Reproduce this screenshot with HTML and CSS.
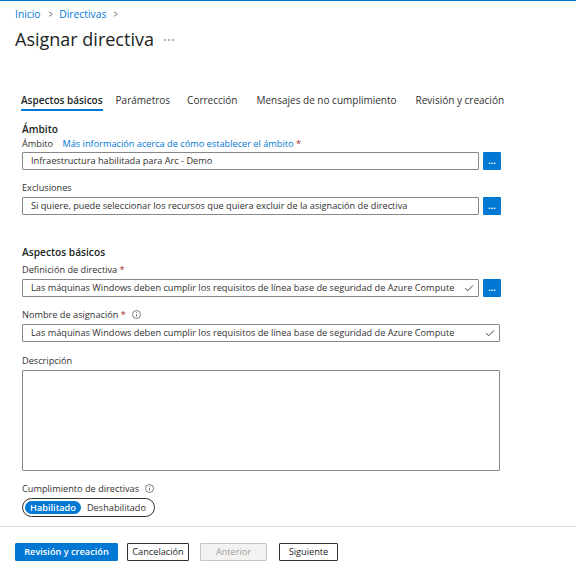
FILE: index.html
```html
<!DOCTYPE html>
<html lang="es">
<head>
<meta charset="utf-8">
<link rel="stylesheet" href="styles.css">
</head>
<body>
<div class="page">
  <header class="header">
    <nav class="crumbs">
      <a class="crumb">Inicio</a><span class="sep">&gt;</span><a class="crumb">Directivas</a><span class="sep">&gt;</span>
    </nav>
    <div class="title-row">
      <h1 class="title">Asignar directiva</h1>
      <svg class="more" width="10" height="4" viewBox="0 0 10 4"><circle cx="1" cy="2" r="0.7" fill="#323130"/><circle cx="5" cy="2" r="0.7" fill="#323130"/><circle cx="9" cy="2" r="0.7" fill="#323130"/></svg>
    </div>
  </header>

  <main class="content">
    <div class="tabs">
      <span class="tab active">Aspectos básicos</span>
      <span class="tab">Parámetros</span>
      <span class="tab">Corrección</span>
      <span class="tab">Mensajes de no cumplimiento</span>
      <span class="tab">Revisión y creación</span>
    </div>

    <section class="section">
      <h2 class="section-title">Ámbito</h2>
      <div class="label l-1">Ámbito <a class="link">Más información acerca de cómo establecer el ámbito</a> <span class="req">*</span></div>
      <div class="field-row f-1">
        <div class="input">Infraestructura habilitada para Arc - Demo</div>
        <button class="dots">...</button>
      </div>
      <div class="label l-11">Exclusiones</div>
      <div class="field-row">
        <div class="input">Si quiere, puede seleccionar los recursos que quiera excluir de la asignación de directiva</div>
        <button class="dots">...</button>
      </div>
    </section>

    <section class="section section-2">
      <h2 class="section-title">Aspectos básicos</h2>
      <div class="label l-4">Definición de directiva <span class="req">*</span></div>
      <div class="field-row">
        <div class="input has-check">Las máquinas Windows deben cumplir los requisitos de línea base de seguridad de Azure Compute
          <svg class="check" viewBox="0 0 10 10" width="10" height="10"><path d="M1 5.2 L3.7 7.8 L9 2.4" fill="none" stroke="#323130" stroke-width="0.9"/></svg>
        </div>
        <button class="dots">...</button>
      </div>
      <div class="label l-11">Nombre de asignación <span class="req">*</span><svg class="info" width="9" height="9" viewBox="0 0 9 9"><circle cx="4.5" cy="4.5" r="4" fill="none" stroke="#605e5c" stroke-width="0.8"/><line x1="4.5" y1="3.9" x2="4.5" y2="6.8" stroke="#605e5c" stroke-width="0.8"/><circle cx="4.5" cy="2.6" r="0.5" fill="#605e5c"/></svg></div>
      <div class="field-row">
        <div class="input has-check wide">Las máquinas Windows deben cumplir los requisitos de línea base de seguridad de Azure Compute
          <svg class="check" viewBox="0 0 10 10" width="10" height="10"><path d="M1 5.2 L3.7 7.8 L9 2.4" fill="none" stroke="#323130" stroke-width="0.9"/></svg>
        </div>
      </div>
      <div class="label l-12">Descripción</div>
      <div class="textarea"></div>
      <div class="label l-11">Cumplimiento de directivas<svg class="info" width="9" height="9" viewBox="0 0 9 9"><circle cx="4.5" cy="4.5" r="4" fill="none" stroke="#605e5c" stroke-width="0.8"/><line x1="4.5" y1="3.9" x2="4.5" y2="6.8" stroke="#605e5c" stroke-width="0.8"/><circle cx="4.5" cy="2.6" r="0.5" fill="#605e5c"/></svg></div>
      <div class="toggle">
        <span class="opt on">Habilitado</span>
        <span class="opt">Deshabilitado</span>
      </div>
    </section>
  </main>

  <footer class="footer">
    <button class="btn primary">Revisión y creación</button>
    <button class="btn cancel">Cancelación</button>
    <button class="btn disabled">Anterior</button>
    <button class="btn next">Siguiente</button>
  </footer>
</div>
</body>
</html>
```

FILE: styles.css
```css
* { box-sizing: border-box; }
html, body { margin: 0; padding: 0; background: #fff; }
body {
  font-family: "Segoe UI", "Open Sans", "Noto Sans", sans-serif;
  color: #323130;
  font-size: 9.2px;
  line-height: 14px;
}
.page {
  width: 576px;
  height: 576px;
  border-top: 1px solid #0078d4;
  display: flex;
  flex-direction: column;
}
.header { padding: 5px 0 0 15px; }
.crumbs { font-size: 10.3px; line-height: 16px; height: 16px; color: #0078d4; display: flex; align-items: center; }
.crumb { color: #0078d4; }
.sep { color: #605e5c; margin: 0 6px 0 7px; font-size: 10px; transform: scaleX(0.7); display: inline-block; }
.title-row { display: flex; align-items: center; margin-top: 4px; height: 26px; }
.title { font-size: 18px; font-weight: 400; margin: 0; line-height: 26px; color: #201f1e; }
.more { margin-left: 10px; margin-top: 2px; display: block; }

.content { padding: 0 0 0 21px; flex: 1; }
.tabs { display: flex; margin-top: 40px; height: 19px; }
.tab { font-size: 10px; line-height: 16px; color: #323130; height: 19px; }
.tab:nth-child(1) { margin-right: 13px; }
.tab:nth-child(2) { margin-right: 17px; }
.tab:nth-child(3) { margin-right: 19px; }
.tab:nth-child(4) { margin-right: 19px; }
.tab.active { border-bottom: 2px solid #0078d4; font-weight: 600; color: #201f1e; }

.section-title { font-size: 10.2px; font-weight: 600; margin: 11px 0 0 1px; line-height: 14px; height: 14px; color: #201f1e; }
.label { display: block; height: 14px; font-size: 9.2px; line-height: 14px; color: #323130; margin-left: 1px; white-space: nowrap; }
.l-1 { margin-top: 1px; }
.l-4 { margin-top: 4px; }
.l-11 { margin-top: 11px; }
.l-12 { margin-top: 12px; }
.link { color: #0078d4; margin-left: 7px; }
.req { color: #a4262c; }
.info { display: inline-block; margin-left: 6px; vertical-align: -1px; }
.field-row { display: flex; align-items: center; margin-top: 2px; margin-left: 1px; height: 18px; }
.f-1 { margin-top: 1px; }
.input {
  width: 457px; height: 18px; border: 1px solid #8a8886; border-radius: 1px;
  font-size: 9.2px; line-height: 16px; padding-left: 8px; color: #323130;
  white-space: nowrap; overflow: hidden; position: relative;
}
.input.wide { width: 478px; }
.check { position: absolute; right: 4px; top: 3px; }
.dots {
  margin-left: 4px; width: 18px; height: 18px; border: none; background: #0078d4; color: #fff;
  font-size: 9px; font-weight: 700; line-height: 14px; padding: 0; font-family: inherit; border-radius: 1px;
}
.section-2 { padding-top: 19px; }
.textarea { width: 478px; height: 101px; border: 1px solid #8a8886; border-radius: 1px; margin-top: 2px; margin-left: 1px; }
.toggle {
  display: inline-flex; align-items: center; margin-top: 2px; margin-left: 1px;
  border: 1px solid #323130; border-radius: 10px; height: 19px; padding: 0 2px; gap: 1px;
}
.opt { font-size: 9.2px; line-height: 13px; padding: 0 6px 0 5px; color: #323130; }
.opt.on { background: #0078d4; color: #fff; border-radius: 7px; font-weight: 600; padding: 0 5px; }

.footer {
  border-top: 1px solid #e1dfdd; height: 50px; display: flex; align-items: flex-start;
  padding: 16px 0 0 15px;
}
.btn {
  height: 18px; font-family: inherit; font-size: 9.2px; line-height: 14px; padding: 0 4px;
  background: #fff; border: 1px solid #323130; color: #201f1e; border-radius: 1px;
}
.btn.primary { background: #0078d4; border-color: #0078d4; color: #fff; font-weight: 600; padding: 0 8px; width: 103px; }
.btn.cancel { margin-left: 9px; width: 62px; padding: 0; }
.btn.disabled { background: #f3f2f1; border-color: #c8c6c4; color: #a19f9d; padding: 0; width: 67px; margin-left: 11px; }
.btn.next { margin-left: 12px; width: 59px; padding: 0; }
```
